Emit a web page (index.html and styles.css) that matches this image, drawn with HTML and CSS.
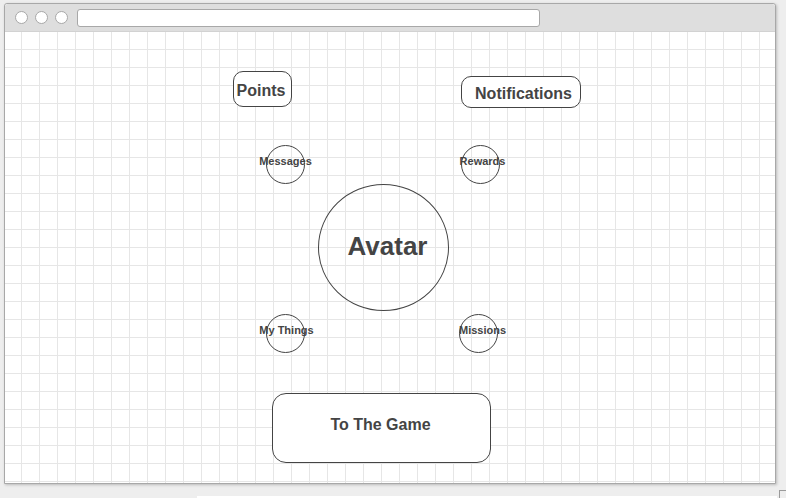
FILE: index.html
```html
<!DOCTYPE html>
<html>
<head>
<meta charset="utf-8">
<link rel="stylesheet" href="styles.css">
</head>
<body>
<div class="window">
  <div class="titlebar">
    <div class="dots">
      <span class="dot"></span><span class="dot"></span><span class="dot"></span>
    </div>
    <div class="address"></div>
  </div>
  <div class="canvas">
    <div class="node pill points">Points</div>
    <div class="node pill notifications">Notifications</div>
    <div class="node small messages"><span>Messages</span></div>
    <div class="node small rewards"><span>Rewards</span></div>
    <div class="node avatar"><span>Avatar</span></div>
    <div class="node small things"><span>My Things</span></div>
    <div class="node small missions"><span>Missions</span></div>
    <div class="node game">To The Game</div>
  </div>
</div>
<div class="footer">
  <div class="strip"></div>
  <div class="corner"></div>
</div>
</body>
</html>
```
FILE: styles.css
```css
html, body {
  margin: 0;
  padding: 0;
}
body {
  background: #eeeeee;
  width: 786px;
  height: 498px;
  overflow: hidden;
  font-family: "Liberation Sans", Arial, Helvetica, sans-serif;
  color: #444444;
}
.window {
  margin: 3px 0 0 4px;
  width: 770px;
  height: 479px;
  border: 1px solid #a8a8a8;
  border-radius: 3px 3px 0 0;
  box-shadow: 1px 1px 3px rgba(0, 0, 0, 0.22);
  display: flex;
  flex-direction: column;
  background: #ffffff;
}
.titlebar {
  height: 28px;
  background: #dedede;
  display: flex;
  align-items: center;
  padding-left: 10px;
  gap: 9px;
  border-radius: 3px 3px 0 0;
  border-bottom: 1px solid #d2d2d2;
  box-sizing: border-box;
}
.dots {
  display: flex;
  gap: 7px;
}
.dot {
  width: 11px;
  height: 11px;
  border-radius: 50%;
  background: #ffffff;
  border: 1px solid #a8a8a8;
}
.address {
  width: 461px;
  height: 16px;
  background: #ffffff;
  border: 1px solid #a8a8a8;
  border-radius: 3px;
}
.canvas {
  position: relative;
  flex: 1;
  background-color: #ffffff;
  background-image:
    linear-gradient(to right, #e6e6e6 1px, transparent 1px),
    linear-gradient(to bottom, #e6e6e6 1px, transparent 1px);
  background-size: 18px 18px;
  background-position: 16px 17px;
}
.node {
  position: absolute;
  box-sizing: border-box;
  border: 1px solid #444444;
  background: #ffffff;
  display: flex;
  align-items: center;
  justify-content: center;
  font-weight: bold;
  color: #444444;
  white-space: nowrap;
}
.pill {
  font-size: 16px;
  border-radius: 10px;
  padding-top: 3px;
}
.points {
  left: 228px;
  top: 39px;
  width: 59px;
  height: 36px;
  padding-right: 3px;
}
.notifications {
  left: 456px;
  top: 44px;
  width: 120px;
  height: 32px;
  padding-left: 5px;
}
.small {
  width: 39px;
  height: 39px;
  border-radius: 50%;
  font-size: 11px;
  background: transparent;
}
.small span {
  position: relative;
  top: -4px;
}
.messages { left: 261px; top: 113px; }
.rewards { left: 456px; top: 113px; }
.rewards span { left: 2px; }
.things { left: 261px; top: 282px; }
.things span { left: 1px; }
.missions { left: 454px; top: 282px; }
.missions span { left: 4px; }
.avatar {
  left: 313px;
  top: 152px;
  width: 131px;
  height: 127px;
  border-radius: 50%;
  font-size: 26px;
  background: transparent;
}
.avatar span {
  position: relative;
  left: 4px;
  top: -1px;
}
.game {
  left: 267px;
  top: 361px;
  width: 219px;
  height: 70px;
  border-radius: 14px;
  font-size: 16px;
  padding-bottom: 6px;
  padding-right: 2px;
}
.footer {
  display: flex;
  align-items: flex-start;
  margin-top: 6px;
  height: 8px;
}
.strip {
  margin-left: 197px;
  margin-top: 6px;
  width: 582px;
  height: 2px;
  background: #ffffff;
}
.corner {
  margin-left: 2px;
  width: 6px;
  height: 8px;
  border-left: 1px solid #9a9a9a;
  border-top: 1px solid #9a9a9a;
}
```
